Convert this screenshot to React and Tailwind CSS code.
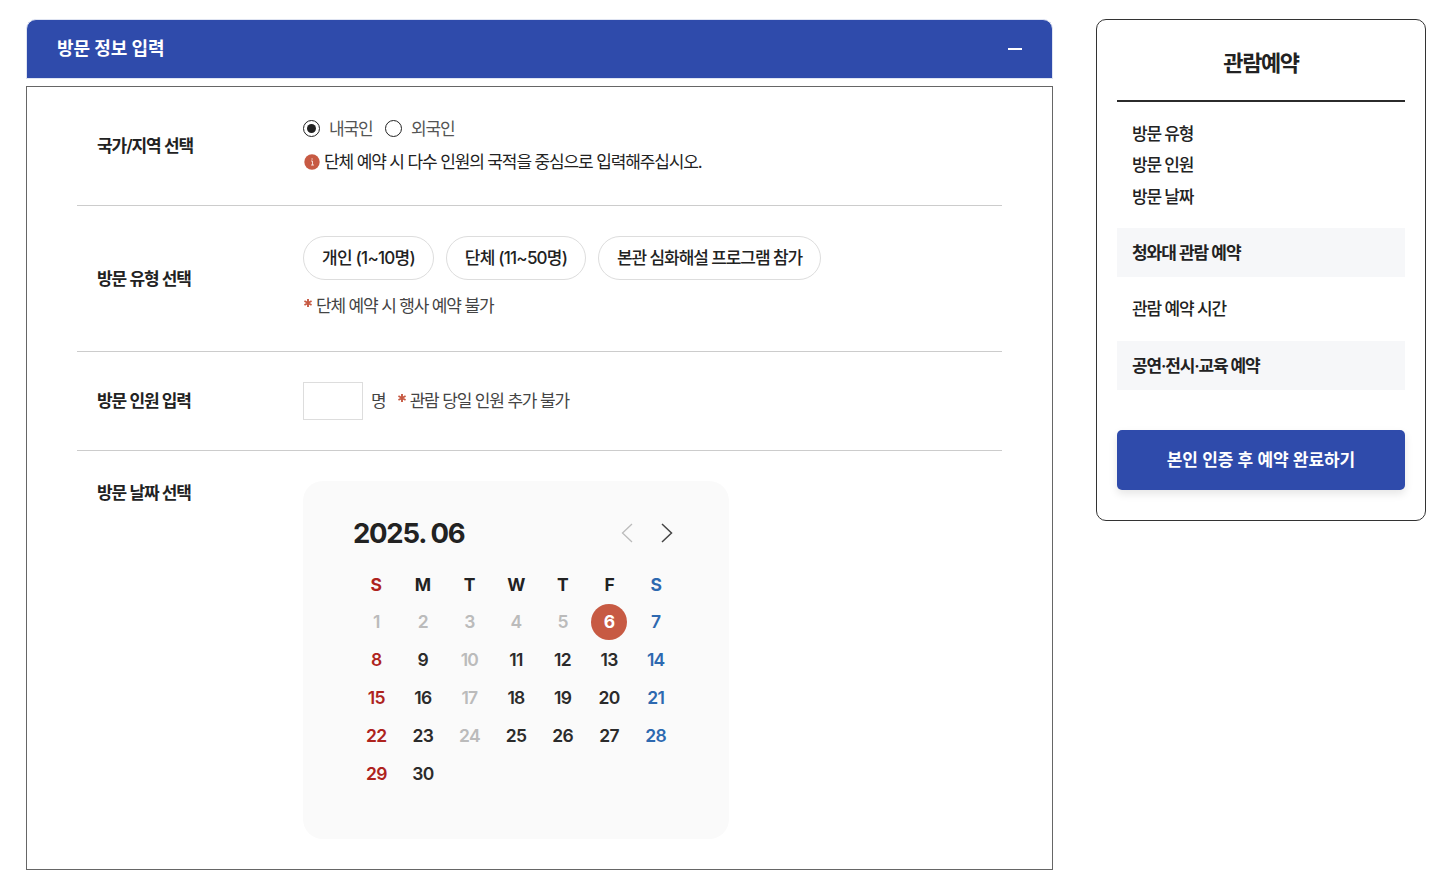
import React, { useState } from 'react';

const VISIT_TYPES = [
  { label: '개인 (1~10명)', size: 'w-[131px] tracking-[-0.75px]' },
  { label: '단체 (11~50명)', size: 'w-[140px] tracking-[-0.78px]' },
  { label: '본관 심화해설 프로그램 참가', size: 'w-[223px] tracking-[-1.08px]' },
];

const WEEKDAYS = ['S', 'M', 'T', 'W', 'T', 'F', 'S'];
const CLOSED_DAYS = [1, 2, 3, 4, 5, 10, 17, 24];
const DAYS = Array.from({ length: 30 }, (_, i) => i + 1);

const dayColor = (day) => {
  if (CLOSED_DAYS.includes(day)) return 'text-[#bbbbbb]';
  if (day % 7 === 1) return 'text-[#ae231d]';
  if (day % 7 === 0) return 'text-[#2d69b0]';
  return 'text-[#2b2b2b]';
};

const FormRow = ({ label, className, children }) => (
  <div className={`flex ${className}`}>
    <div className="w-[226px] shrink-0 pl-5 text-[17px] leading-6 font-semibold tracking-[-1.06px] text-[#222]">
      {label}
    </div>
    <div className="flex-1">{children}</div>
  </div>
);

const Radio = ({ label, checked, onClick }) => (
  <button type="button" onClick={onClick} className="flex items-center">
    <span className="flex h-[17px] w-[17px] items-center justify-center rounded-full border border-[#222]">
      {checked && <span className="h-[9px] w-[9px] rounded-full bg-[#222]"></span>}
    </span>
    <span className="ml-[9px] w-11 text-left text-[17px] leading-6 tracking-[-1.2px] whitespace-nowrap text-[#555]">{label}</span>
  </button>
);

const Notice = ({ children }) => (
  <p className="flex items-center text-[17px] leading-6 tracking-[-1.16px] text-[#444]">
    <svg className="mr-1 ml-px h-2 w-2 -translate-y-[3px]" viewBox="0 0 8 8" fill="none" stroke="#c75a43" strokeWidth="1.9">
      <path d="M4 0v8M.4 2l7.2 4M.4 6l7.2-4" />
    </svg>
    {children}
  </p>
);

const Calendar = () => {
  const [selected, setSelected] = useState(6);

  return (
    <div className="h-[358px] w-[426px] rounded-[20px] bg-[#fafafa] pt-[34px] pl-[50px]">
      <div className="flex h-9 w-[320px] items-center justify-between">
        <h3 className="text-[27.5px] leading-9 font-bold tracking-[-1.25px] text-[#222]">2025. 06</h3>
        <div className="flex items-center gap-7">
          <svg className="h-5 w-3" viewBox="0 0 12 20" fill="none" stroke="#bbb" strokeWidth="1.3">
            <path d="M11 1 1.5 10l9.5 9" />
          </svg>
          <svg className="h-5 w-3" viewBox="0 0 12 20" fill="none" stroke="#444" strokeWidth="1.5">
            <path d="m1 1 9.5 9L1 19" />
          </svg>
        </div>
      </div>
      <div className="mt-4 grid w-[326.5px] grid-cols-7 text-center text-[17.5px] font-bold">
        {WEEKDAYS.map((d, i) => (
          <div
            key={i}
            className={`flex h-9 items-center justify-center pt-px ${
              i === 0 ? 'text-[#ae231d]' : i === 6 ? 'text-[#2d69b0]' : 'text-[#222]'
            }`}
          >
            {d}
          </div>
        ))}
      </div>
      <div className="grid w-[326px] grid-cols-7 text-[17.5px] font-semibold tracking-[-0.7px]">
        {DAYS.map((day) => (
          <button key={day} type="button" onClick={() => setSelected(day)} className="flex h-[38px] items-center justify-center">
            <span
              className={`flex h-9 w-9 items-center justify-center rounded-full ${
                day === selected ? 'bg-[#c75a43] font-bold text-white' : dayColor(day)
              }`}
            >
              {day}
            </span>
          </button>
        ))}
      </div>
    </div>
  );
};

const Summary = () => (
  <aside className="h-[502px] w-[330px] rounded-[10px] border border-[#333] px-5">
    <h2 className="flex h-[82px] items-center justify-center border-b-2 border-[#2b2b2b] pt-[7px] text-[22px] font-bold tracking-[-1.4px] text-[#222]">
      관람예약
    </h2>
    <ul className="pt-[17px] pl-[15px] text-[17px] font-medium tracking-[-1.15px] text-[#222]">
      <li className="leading-[31px]">방문 유형</li>
      <li className="leading-[31px]">방문 인원</li>
      <li className="leading-[33px]">방문 날짜</li>
    </ul>
    <h3 className="mt-[13.5px] flex h-[49px] items-center bg-[#f6f7f9] pt-[3px] pl-[15px] text-[17px] font-semibold tracking-[-1.06px] text-[#222]">
      청와대 관람 예약
    </h3>
    <p className="flex h-16 items-center pt-0.5 pl-[15px] text-[17px] font-medium tracking-[-1.12px] text-[#222]">관람 예약 시간</p>
    <h3 className="flex h-[49px] items-center bg-[#f6f7f9] pt-[3px] pl-[15px] text-[17px] font-semibold tracking-[-1.16px] text-[#222]">
      공연·전시·교육 예약
    </h3>
    <button
      type="button"
      className="mt-10 h-[60px] w-full rounded-[5px] bg-[#2f4bab] pt-0.5 text-[17px] font-semibold tracking-[-0.05px] text-white shadow-[0_4px_8px_rgba(0,0,0,0.1)]"
    >
      본인 인증 후 예약 완료하기
    </button>
  </aside>
);

const App = () => {
  const [nation, setNation] = useState('domestic');
  const [count, setCount] = useState('');

  return (
    <div className="flex h-[872px] w-[1452px] items-start overflow-hidden bg-white pt-[19px] pl-[26px] font-[Inter,'Noto_Sans_CJK_KR',sans-serif]">
      <main className="mr-[43px] w-[1027px]">
        <div className="flex h-[60px] items-center justify-between rounded-t-[10px] border border-[#dfe4f2] bg-[#2f4bab] pr-[30px] pl-[30px] text-white">
          <h2 className="text-lg font-bold tracking-[-0.05px]">방문 정보 입력</h2>
          <span className="h-0.5 w-3.5 bg-white"></span>
        </div>

        <section className="mt-[7px] h-[784px] border border-[#666] px-[50px]">
          <FormRow label="국가/지역 선택" className="h-[119px] items-center border-b border-[#ccc]">
            <div className="flex items-center gap-3">
              <Radio label="내국인" checked={nation === 'domestic'} onClick={() => setNation('domestic')} />
              <Radio label="외국인" checked={nation === 'foreign'} onClick={() => setNation('foreign')} />
            </div>
            <p className="mt-[9px] mb-0.5 flex items-center text-[17px] leading-6 tracking-[-1.13px] text-[#222]">
              <svg className="mr-1 ml-px h-4 w-4" viewBox="0 0 16 16">
                <circle cx="8" cy="8" r="7.7" fill="#c75a43" />
                <path d="M7 7h1.5v4.2M7 11h3M7.4 5h1.4" fill="none" stroke="#f4d9d3" strokeWidth="1" />
              </svg>
              단체 예약 시 다수 인원의 국적을 중심으로 입력해주십시오.
            </p>
          </FormRow>

          <FormRow label="방문 유형 선택" className="h-[146px] items-center border-b border-[#ccc]">
            <div className="flex gap-3">
              {VISIT_TYPES.map((t) => (
                <button
                  key={t.label}
                  type="button"
                  className={`${t.size} h-11 rounded-full border border-[#ddd] pt-0.5 text-[17px] font-medium whitespace-nowrap text-[#222]`}
                >
                  {t.label}
                </button>
              ))}
            </div>
            <div className="mt-[14px] mb-[3px]">
              <Notice>단체 예약 시 행사 예약 불가</Notice>
            </div>
          </FormRow>

          <FormRow label="방문 인원 입력" className="h-[99px] items-center border-b border-[#ccc]">
            <div className="flex items-center">
              <input
                value={count}
                onChange={(e) => setCount(e.target.value)}
                className="h-[38px] w-[60px] border border-[#ddd] px-2 text-[17px] outline-none"
              />
              <span className="mr-2.5 ml-2 text-[17px] leading-6 text-[#444]">명</span>
              <Notice>관람 당일 인원 추가 불가</Notice>
            </div>
          </FormRow>

          <FormRow label="방문 날짜 선택" className="pt-[30px]">
            <Calendar />
          </FormRow>
        </section>
      </main>

      <Summary />
    </div>
  );
};

export default App;
